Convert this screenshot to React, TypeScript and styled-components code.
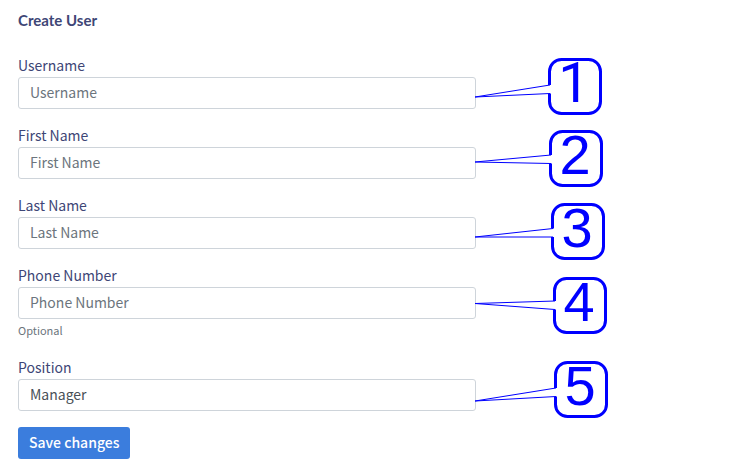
import React from "react";
import styled, { createGlobalStyle } from "styled-components";

const GlobalStyle = createGlobalStyle`
  *, *::before, *::after { box-sizing: border-box; }
  body {
    margin: 0;
    background: #fff;
    color: #3e4676;
    font-family: "Noto Sans CJK SC", "Noto Sans", sans-serif;
    font-size: 14px;
    line-height: 20px;
  }
`;

const Page = styled.main`
  padding: 10px 18px 16px;
`;

const Title = styled.h1`
  margin: 0 0 27px;
  font-family: Lato, sans-serif;
  font-size: 15px;
  font-weight: 700;
  line-height: 20px;
`;

const Form = styled.form`
  display: flex;
  flex-direction: column;
  gap: 18px;
  max-width: 458px;
`;

const FieldGroup = styled.div`
  display: flex;
  flex-direction: column;
`;

const Label = styled.label`
  display: block;
  padding-bottom: 4px;
  line-height: 16px;
`;

const Control = styled.div`
  position: relative;
`;

const TextInput = styled.input`
  display: block;
  width: 100%;
  height: 32px;
  padding: 0 11px 2px;
  border: 1px solid #ced4da;
  border-radius: 3px;
  background: #fff;
  color: #495057;
  font: inherit;

  &::placeholder {
    color: #6c757d;
    opacity: 1;
  }
`;

const Hint = styled.small`
  padding: 2px 0;
  color: #6c757d;
  font-size: 11px;
  line-height: 18px;
`;

const SaveButton = styled.button`
  align-self: flex-start;
  height: 32px;
  margin-top: -2px;
  padding: 0 11px 2px;
  border: 0;
  border-radius: 3px;
  background: #3b7ddd;
  color: #fff;
  font: inherit;
  font-weight: 500;
`;

const CalloutDrawing = styled.svg<{ $top: number }>`
  position: absolute;
  left: 100%;
  top: ${({ $top }) => $top}px;
  margin-left: -1px;
  overflow: visible;
  pointer-events: none;
`;

const CalloutDigit = styled.text<{ $plain: boolean }>`
  fill: #0000ff;
  font-family: ${({ $plain }) => ($plain ? "Roboto" : '"Liberation Sans"')}, Arial, sans-serif;
  font-size: 56px;
  text-anchor: middle;
`;

type CalloutShape = { top: number; left: number; tip: number; join: number };

function Callout({ number, shape }: { number: number; shape: CalloutShape }) {
  const { top, left, tip, join } = shape;
  const l = left + 1.5;
  const r = left + 52.5;
  const joinEnd = join + 8.5;
  const outline = `M${l} ${join}V13.5A12 12 0 0 1 ${l + 12} 1.5H${r - 12}A12 12 0 0 1 ${r} 13.5V43.5A12 12 0 0 1 ${r - 12} 55.5H${l + 12}A12 12 0 0 1 ${l} 43.5V${joinEnd}`;
  return (
    <CalloutDrawing $top={top} width={left + 54} height={57}>
      <path d={outline} fill="none" stroke="#0000ff" strokeWidth={3} />
      <path
        d={`M${left + 2} ${join}L0 ${tip}L${left + 2} ${joinEnd}`}
        fill="#fff"
        stroke="#0000ff"
        strokeWidth={1}
        strokeLinejoin="bevel"
      />
      {/* The numeral one is set in a face that draws it without a foot. */}
      <CalloutDigit $plain={number === 1} x={left + 26} y={44}>
        {number}
      </CalloutDigit>
    </CalloutDrawing>
  );
}

type FieldData = {
  id: string;
  label: string;
  value?: string;
  hint?: string;
  callout: CalloutShape;
};

const fields: FieldData[] = [
  { id: "username", label: "Username", callout: { top: -19, left: 73, tip: 39, join: 27 } },
  { id: "first-name", label: "First Name", callout: { top: -17, left: 74, tip: 32, join: 25 } },
  { id: "last-name", label: "Last Name", callout: { top: -14, left: 76, tip: 34, join: 25.5 } },
  {
    id: "phone-number",
    label: "Phone Number",
    hint: "Optional",
    callout: { top: -10, left: 78, tip: 26.5, join: 24 },
  },
  {
    id: "position",
    label: "Position",
    value: "Manager",
    callout: { top: -18, left: 79, tip: 40, join: 27 },
  },
];

function Field({ field, number }: { field: FieldData; number: number }) {
  const hintId = field.hint ? `${field.id}-hint` : undefined;
  return (
    <FieldGroup>
      <Label htmlFor={field.id}>{field.label}</Label>
      <Control>
        <TextInput
          id={field.id}
          name={field.id}
          type="text"
          placeholder={field.label}
          defaultValue={field.value}
          aria-describedby={hintId}
        />
        <Callout number={number} shape={field.callout} />
      </Control>
      {field.hint && <Hint id={hintId}>{field.hint}</Hint>}
    </FieldGroup>
  );
}

export default function App() {
  return (
    <>
      <GlobalStyle />
      <Page>
        <Title>Create User</Title>
        <Form onSubmit={(event) => event.preventDefault()}>
          {fields.map((field, index) => (
            <Field key={field.id} field={field} number={index + 1} />
          ))}
          <SaveButton type="submit">Save changes</SaveButton>
        </Form>
      </Page>
    </>
  );
}
